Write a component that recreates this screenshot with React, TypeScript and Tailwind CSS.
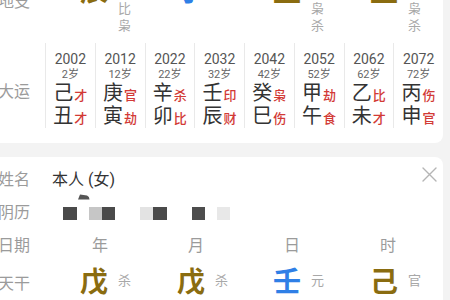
import React from "react";

const OLIVE = "text-[#8a6c10]";
const BLUE = "text-[#2f7fe6]";

const dayun = [
  { y: "2002", a: "2岁", s: "己", sg: "才", b: "丑", bg: "才" },
  { y: "2012", a: "12岁", s: "庚", sg: "官", b: "寅", bg: "劫" },
  { y: "2022", a: "22岁", s: "辛", sg: "杀", b: "卯", bg: "比" },
  { y: "2032", a: "32岁", s: "壬", sg: "印", b: "辰", bg: "财" },
  { y: "2042", a: "42岁", s: "癸", sg: "枭", b: "巳", bg: "伤" },
  { y: "2052", a: "52岁", s: "甲", sg: "劫", b: "午", bg: "食" },
  { y: "2062", a: "62岁", s: "乙", sg: "比", b: "未", bg: "才" },
  { y: "2072", a: "72岁", s: "丙", sg: "伤", b: "申", bg: "官" },
];

const branches = [
  { c: "辰", color: OLIVE, pl: "pl-[28px]", subs: ["杀", "比", "枭"] },
  { c: "子", color: BLUE, pl: "pl-[29px]", subs: ["劫"] },
  { c: "丑", color: OLIVE, pl: "pl-[29px]", subs: ["官", "枭", "杀"] },
  { c: "丑", color: OLIVE, pl: "pl-[30px]", subs: ["官", "枭", "杀"] },
];

const stems = [
  { c: "戊", color: OLIVE, pl: "pl-[28px]", sub: "杀" },
  { c: "戊", color: OLIVE, pl: "pl-[29px]", sub: "杀" },
  { c: "壬", color: BLUE, pl: "pl-[29px]", sub: "元" },
  { c: "己", color: OLIVE, pl: "pl-[30px]", sub: "官" },
];

function Label({ children, extra = "" }: { children: React.ReactNode; extra?: string }) {
  return (
    <div className={`shrink-0 flex items-center text-[16px] leading-[24px] text-[#9b9b9b] ${extra}`}>
      {children}
    </div>
  );
}

export default function App() {
  return (
    <div className="w-[450px] h-[300px] overflow-hidden bg-[#f3f3f3] font-['Roboto','Noto_Sans_CJK_SC',sans-serif]">
      <div className="-mt-[22px]">
        {/* top card */}
        <div className="-ml-[12px] mr-[7px] bg-white rounded-br-[8px] pl-[10px] pb-[15px]">
          <div className="flex">
            <Label extra="w-[54px] pb-[8px]">地支</Label>
            <div className="grid grid-cols-4 w-[384px]">
              {branches.map((b, i) => (
                <div key={i} className={`flex items-start ${b.pl}`}>
                  <span className={`text-[28px] leading-[28px] font-bold ${b.color}`}>{b.c}</span>
                  <div className="ml-[10px] mt-[5px] flex flex-col text-[13px] leading-[17px] text-[#a8a8a8]">
                    {b.subs.map((s, j) => (
                      <span key={j}>{s}</span>
                    ))}
                  </div>
                </div>
              ))}
            </div>
          </div>
          <div className="flex mt-[9px]">
            <Label extra="w-[47px] pt-[12px]">大运</Label>
            {dayun.map((d, i) => (
              <div
                key={i}
                className="w-[49.75px] h-[85px] shrink-0 border-l border-[#e9e9e9] flex flex-col items-center pt-[8px]"
              >
                <div className="text-[14px] leading-[17px] text-[#555]">{d.y}</div>
                <div className="text-[11px] leading-[13px] text-[#666]">{d.a}</div>
                <div className="mt-[2px] flex items-baseline leading-[21px]">
                  <span className="text-[20px] text-[#333]">{d.s}</span>
                  <span className="text-[13px] font-medium text-[#d23a36] ml-[1px]">{d.sg}</span>
                </div>
                <div className="flex items-baseline leading-[21px]">
                  <span className="text-[20px] text-[#333]">{d.b}</span>
                  <span className="text-[13px] font-medium text-[#d23a36] ml-[1px]">{d.bg}</span>
                </div>
              </div>
            ))}
          </div>
        </div>

        <div className="h-[14px]" />

        {/* bottom card */}
        <div className="relative -ml-[12px] mr-[7px] bg-white rounded-tr-[8px] pl-[10px] pt-[6px] pb-[20px]">
          <button className="absolute top-[10px] right-[6px] w-[15px] h-[15px]" aria-label="close">
            <svg viewBox="0 0 15 15" width="15" height="15">
              <path d="M1 1 L14 14 M14 1 L1 14" stroke="#b5b5b5" strokeWidth="1.4" strokeLinecap="round" />
            </svg>
          </button>

          <div className="flex h-[33px] items-center">
            <Label extra="w-[54px]">姓名</Label>
            <span className="relative inline-block text-[16px] leading-[24px] text-[#333]">
              本人 (女)
              <svg className="absolute left-[25px] top-[26px] block" width="13" height="6" viewBox="0 0 13 6">
                <path d="M1 5.5 L3 0.5 L10 1.5 Q12.5 2.5 12.5 5.5 Z" fill="#555" />
              </svg>
            </span>
          </div>

          <div className="flex h-[33px] items-center">
            <Label extra="w-[54px]">阴历</Label>
            <div className="flex items-center mt-[2px]">
              <span className="ml-[11px] w-[14px] h-[13px] bg-[#4a4a4a]" />
              <span className="ml-[12px] w-[13px] h-[13px] bg-[#c6c6c6]" />
              <span className="w-[13px] h-[13px] bg-[#4a4a4a]" />
              <span className="ml-[25px] w-[13px] h-[13px] bg-[#e3e3e3]" />
              <span className="w-[14px] h-[13px] bg-[#4a4a4a]" />
              <span className="ml-[25px] w-[13px] h-[13px] bg-[#4d4d4d]" />
              <span className="ml-[12px] w-[13px] h-[13px] bg-[#e8e8e8]" />
            </div>
          </div>

          <div className="flex h-[33px] items-center">
            <Label extra="w-[54px]">日期</Label>
            <div className="grid grid-cols-4 w-[384px] text-[16px] leading-[24px] text-[#9b9b9b] text-center">
              <span>年</span>
              <span>月</span>
              <span>日</span>
              <span>时</span>
            </div>
          </div>

          <div className="flex h-[44px]">
            <Label extra="w-[54px]">天干</Label>
            <div className="grid grid-cols-4 w-[384px] pt-[7px]">
              {stems.map((s, i) => (
                <div key={i} className={`flex items-start ${s.pl}`}>
                  <span className={`text-[28px] leading-[28px] font-bold ${s.color}`}>{s.c}</span>
                  <span className="ml-[10px] mt-[3px] text-[13px] leading-[17px] text-[#a8a8a8]">{s.sub}</span>
                </div>
              ))}
            </div>
          </div>
        </div>
      </div>
    </div>
  );
}
